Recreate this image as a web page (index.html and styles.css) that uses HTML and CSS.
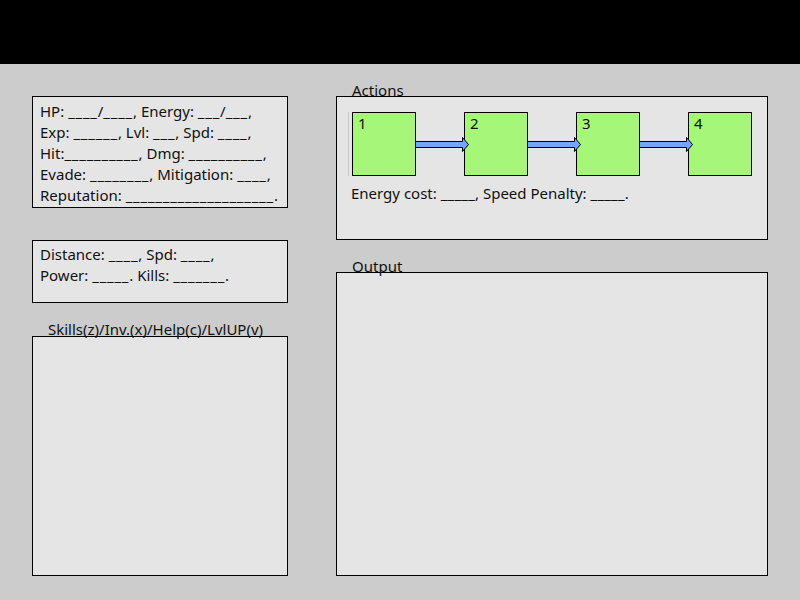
FILE: index.html
```html
<!DOCTYPE html>
<html>
<head>
<meta charset="utf-8">
<link rel="stylesheet" href="styles.css">
</head>
<body>
<div class="header"></div>
<div class="main">
  <div class="col left">
    <div class="panel stats">
      <div>HP: <span class="u">____</span>/<span class="u">____</span>, Energy: <span class="u">___</span>/<span class="u">___</span>,</div>
      <div>Exp: <span class="u">______</span>, Lvl: <span class="u">___</span>, Spd: <span class="u">____</span>,</div>
      <div>Hit:<span class="u">__________</span>, Dmg: <span class="u">__________</span>,</div>
      <div>Evade: <span class="u">________</span>, Mitigation: <span class="u">____</span>,</div>
      <div>Reputation: <span class="u">____________________</span>.</div>
    </div>
    <div class="panel travel">
      <div>Distance: <span class="u">____</span>, Spd: <span class="u">____</span>,</div>
      <div>Power: <span class="u">_____</span>. Kills: <span class="u">_______</span>.</div>
    </div>
    <div class="labeled skills">
      <div class="label">Skills(z)/Inv.(x)/Help(c)/LvlUP(v)</div>
      <div class="panel menu"></div>
    </div>
  </div>
  <div class="col right">
    <div class="labeled">
      <div class="label">Actions</div>
      <div class="panel actions">
        <div class="chain">
          <div class="box">1</div>
          <svg class="arrow" width="48" height="16" viewBox="0 0 48 16"><path d="M0 5.5 H46.5 V1.5 L52.5 8.5 L46.5 15.5 V11.5 H0" fill="#78a6f4" stroke="#000" stroke-width="1"/></svg>
          <div class="box">2</div>
          <svg class="arrow" width="48" height="16" viewBox="0 0 48 16"><path d="M0 5.5 H46.5 V1.5 L52.5 8.5 L46.5 15.5 V11.5 H0" fill="#78a6f4" stroke="#000" stroke-width="1"/></svg>
          <div class="box">3</div>
          <svg class="arrow" width="48" height="16" viewBox="0 0 48 16"><path d="M0 5.5 H46.5 V1.5 L52.5 8.5 L46.5 15.5 V11.5 H0" fill="#78a6f4" stroke="#000" stroke-width="1"/></svg>
          <div class="box">4</div>
        </div>
        <div class="cost">Energy cost: <span class="uc">_____</span>, Speed Penalty: <span class="uc">_____</span>.</div>
      </div>
    </div>
    <div class="labeled">
      <div class="label">Output</div>
      <div class="panel output"></div>
    </div>
  </div>
</div>
</body>
</html>
```
FILE: styles.css
```css
html, body {
  margin: 0;
  padding: 0;
}
body {
  background: #cccccc;
  width: 800px;
  height: 600px;
  overflow: hidden;
  font-family: "Noto Sans", "Open Sans", sans-serif;
  font-size: 15px;
  color: #111;
}
.u {
  letter-spacing: 0.75px;
}
.uc {
  letter-spacing: 0.2px;
}
.header {
  height: 64px;
  background: #000;
}
.main {
  display: flex;
  gap: 48px;
  padding: 32px 32px 0 32px;
}
.col {
  display: flex;
  flex-direction: column;
  gap: 32px;
}
.left { width: 256px; }
.right { width: 432px; }
.panel {
  box-sizing: border-box;
  background: #e5e5e5;
  border: 1px solid #000;
}
.stats {
  height: 112px;
  padding: 4px 0 0 7px;
  line-height: 21px;
}
.travel {
  height: 63px;
  padding: 3px 0 0 7px;
  line-height: 21px;
}
.labeled {
  position: relative;
}
.skills {
  margin-top: 1px;
}
.label {
  position: absolute;
  left: 16px;
  top: -16px;
  line-height: 20px;
  z-index: 1;
  white-space: nowrap;
}
.skills .label { top: -17px; }
.menu { height: 240px; }
.actions {
  height: 144px;
  padding: 15px 0 0 11px;
}
.chain {
  display: flex;
  align-items: center;
  border-left: 1px solid #c9c9c9;
  padding-left: 3px;
  height: 64px;
}
.box {
  box-sizing: border-box;
  width: 64px;
  height: 64px;
  background: #a6f67a;
  border: 1px solid #000;
  padding: 1px 0 0 5px;
  line-height: 18px;
  flex: none;
}
.arrow {
  display: block;
  flex: none;
  overflow: visible;
  position: relative;
  z-index: 1;
}
.cost {
  margin-top: 7px;
  margin-left: 3px;
  line-height: 20px;
}
.output { height: 304px; }
```
